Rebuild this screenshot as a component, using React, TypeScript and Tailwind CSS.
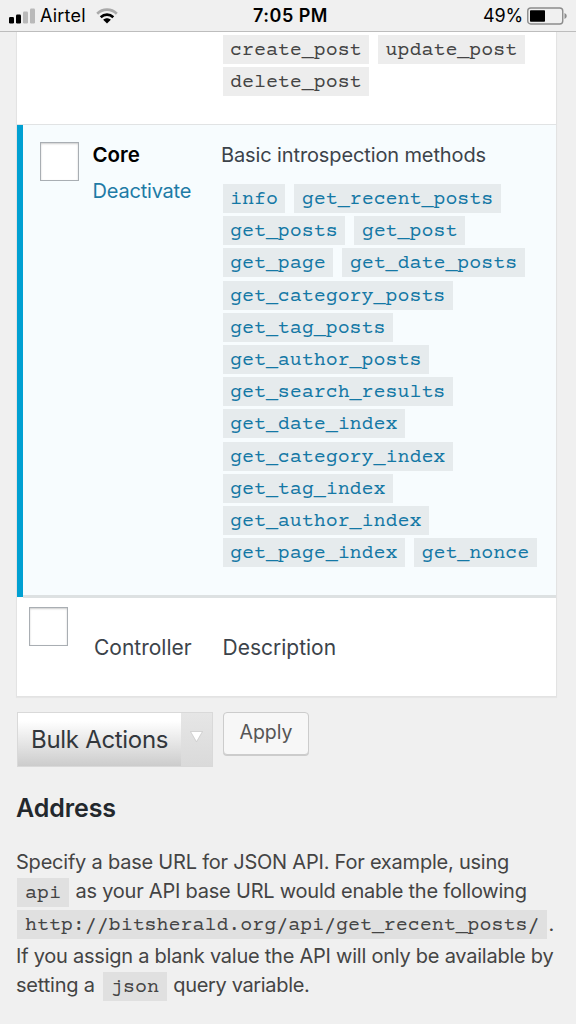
import React from "react";

const coreMethods: string[][] = [
  ["info", "get_recent_posts"],
  ["get_posts", "get_post"],
  ["get_page", "get_date_posts"],
  ["get_category_posts"],
  ["get_tag_posts"],
  ["get_author_posts"],
  ["get_search_results"],
  ["get_date_index"],
  ["get_category_index"],
  ["get_tag_index"],
  ["get_author_index"],
  ["get_page_index", "get_nonce"],
];

const postMethods: string[][] = [["create_post", "update_post"], ["delete_post"]];

const mono = "font-['Courier_Prime','Liberation_Mono',monospace] text-[20px] tracking-[-0.03px]";

function Chips({ rows, link = false }: { rows: string[][]; link?: boolean }) {
  const tone = link ? "bg-[#e6ebed] text-[#1478a5]" : "bg-[#ededed] text-[#444444]";
  return (
    <div>
      {rows.map((row) => (
        <div key={row[0]} className="flex h-[32.2px] items-start gap-[9px]">
          {row.map((name) => (
            <code key={name} className={`${mono} ${tone} block h-[29px] whitespace-nowrap px-[7.5px] leading-[31px]`}>
              {name}
            </code>
          ))}
        </div>
      ))}
    </div>
  );
}

function Code({ children }: { children: string }) {
  return (
    <code className={`${mono} block h-[29px] whitespace-nowrap bg-[#e0e0e0] px-[8px] leading-[31px] text-[#444444]`}>
      {children}
    </code>
  );
}

function Checkbox() {
  return (
    <div className="h-[38.5px] w-[38.5px] shrink-0 border border-[#a9aeb3] bg-white shadow-[inset_0_1px_2px_rgba(0,0,0,0.2)]" />
  );
}

function StatusBar() {
  return (
    <header className="flex h-8 shrink-0 items-center border-b border-[#bdbdbd] bg-[#f0f0f0] pl-[9px] text-black">
      <svg width="26" height="16" viewBox="0 0 26 16">
        <rect x="0" y="9" width="5" height="6.5" rx="1.2" />
        <rect x="7" y="6.5" width="5" height="9" rx="1.2" />
        <rect x="14" y="3.5" width="5" height="12" rx="1.2" fill="#b9b9b9" />
        <rect x="21" y="0.5" width="5" height="15" rx="1.2" fill="#b9b9b9" />
      </svg>
      <span className="ml-[5px] w-[50px] whitespace-nowrap text-[18px] tracking-[0.2px]">Airtel</span>
      <svg className="ml-[6px]" width="22" height="16" viewBox="0 0 22 16" fill="none">
        <path d="M1.2 5.7 C6.8 0.3 15.2 0.3 20.8 5.7" stroke="#aaaaaa" strokeWidth="2.7" />
        <path d="M4.7 9.2 C8.4 5.8 13.6 5.8 17.3 9.2" stroke="#000" strokeWidth="2.7" />
        <path d="M7.2 11.7 C9.4 9.7 12.6 9.7 14.8 11.7 L11 15.5Z" fill="#000" />
      </svg>
      <span className="ml-[135px] w-[80px] whitespace-nowrap text-[18px] font-semibold tracking-[0.5px]">7:05 PM</span>
      <span className="ml-[150px] w-[40px] whitespace-nowrap text-[18px] tracking-[-0.2px]">49%</span>
      <svg className="ml-[4px]" width="41" height="18" viewBox="0 0 41 18">
        <rect x="0.75" y="1" width="35" height="16" rx="3" fill="none" stroke="#8c8c8c" strokeWidth="1.4" />
        <rect x="3" y="3.2" width="15" height="11.6" rx="0.8" />
        <path d="M37.5 6 Q39.8 7 39.8 9 Q39.8 11 37.5 12Z" fill="#8c8c8c" />
      </svg>
    </header>
  );
}

export default function App() {
  return (
    <div className="flex h-[1024px] w-[576px] flex-col overflow-hidden bg-[#f0f0f0] font-['Inter','Liberation_Sans',sans-serif] text-[20px] text-[#3c434a]">
      <StatusBar />
      <main>
        <section className="ml-4 mr-[19px] h-[665px] border border-t-0 border-[#e3e3e3] bg-white shadow-[0_1px_1px_rgba(0,0,0,0.04)]">
          <div className="h-[93px] border-b border-[#e1e3e4] pl-[205.5px] pt-[3px]">
            <Chips rows={postMethods} />
          </div>
          <div className="flex h-[473px] bg-[#f7fcfe]">
            <div className="h-[471.5px] w-[6px] bg-[#00a0d2]" />
            <div className="flex flex-1 border-b-[3px] border-[#dde1e2]">
              <div className="w-[69.5px] pl-[17px] pt-[17px]">
                <Checkbox />
              </div>
              <div className="w-[129.5px] pt-[15px]">
                <div className="whitespace-nowrap text-[20.5px] font-semibold leading-[30px] text-black">Core</div>
                <a className="mt-[6px] block whitespace-nowrap leading-[31px] tracking-[-0.2px] text-[#1e7ba6]">Deactivate</a>
              </div>
              <div className="pt-[15px]">
                <p className="-ml-px whitespace-nowrap leading-[30px] tracking-[-0.12px]">Basic introspection methods</p>
                <div className="pl-[0.5px] pt-[14px]">
                  <Chips rows={coreMethods} link />
                </div>
              </div>
            </div>
          </div>
          <div className="flex text-[21px]">
            <div className="w-[77px] pl-[12px] pt-[9px]">
              <Checkbox />
            </div>
            <div className="w-[128.5px] whitespace-nowrap pt-[34px] leading-[31px]">Controller</div>
            <div className="whitespace-nowrap pt-[34px] leading-[31px]">Description</div>
          </div>
        </section>

        <div className="flex items-start pl-[17px] pt-[15px]">
          <div className="flex h-[55px] w-[196px] border border-[#d9d9d9] text-[#32373c]">
            <div className="w-[163px] whitespace-nowrap bg-linear-to-b from-white from-15% to-[#cccccc] pl-[13px] text-[24px] leading-[54px] tracking-[-0.3px]">
              Bulk Actions
            </div>
            <div className="flex-1 bg-linear-to-b from-[#e6e6e6] to-[#dadada] pl-[8.5px] pt-[18px]">
              <svg width="13" height="12" viewBox="0 0 13 12">
                <path d="M0.5 0.5H12.5L6.5 10.8Z" fill="#fff" stroke="#c6c6c6" strokeWidth="0.7" />
              </svg>
            </div>
          </div>
          <button className="ml-[10px] h-[43px] w-[86px] whitespace-nowrap rounded-[4px] border-[1.5px] border-[#cccccc] bg-[#f7f7f7] pb-[1px] text-[19.5px] text-[#555555] shadow-[0_1px_0_#cccccc]">
            Apply
          </button>
        </div>

        <h2 className="pl-4 pt-[23px] text-[25px] font-semibold leading-[36px] tracking-[-0.1px] text-[#23282d]">Address</h2>

        <div className="pl-4 pt-[21px] text-[#444444] [&>div]:flex [&>div]:whitespace-pre">
          <div className="h-[31px] leading-[30px] tracking-[-0.22px]">Specify a base URL for JSON API. For example, using</div>
          <div className="h-[32px] gap-[7px] pl-px leading-[27px]">
            <Code>api</Code>
            <span className="-ml-[0.5px] tracking-[-0.22px]">as your API base URL would enable the following</span>
          </div>
          <div className="h-[30px] gap-[1px] pl-px leading-[28px]">
            <Code>http://bitsherald.org/api/get_recent_posts/</Code>
            <span>.</span>
          </div>
          <div className="h-[32px] leading-[32px] tracking-[-0.24px]">If you assign a blank value the API will only be available by</div>
          <div className="gap-[7px] leading-[27px]">
            <span className="w-[80px] tracking-[-0.2px]">setting a</span>
            <Code>json</Code>
            <span className="-ml-[0.5px] tracking-[-0.35px]">query variable.</span>
          </div>
        </div>
      </main>
    </div>
  );
}
